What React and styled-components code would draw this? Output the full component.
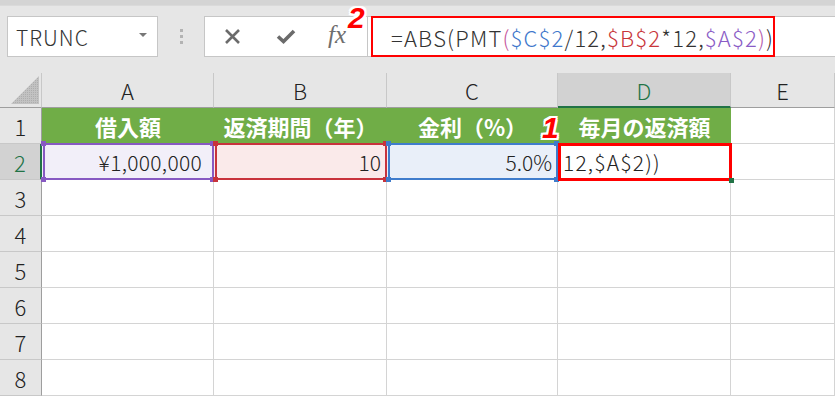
import React from 'react'
import styled, { createGlobalStyle } from 'styled-components'

const GlobalStyle = createGlobalStyle`
  html, body {
    margin: 0;
    padding: 0;
    background: #fff;
  }
  body {
    font-family: "Noto Sans CJK JP", "Noto Sans", sans-serif;
    font-weight: 300;
    color: #222;
  }
`

const Page = styled.div`
  width: 835px;
  height: 397px;
  overflow: hidden;
  background: #fff;
`

const TopStrip = styled.div`
  height: 5px;
  background: #d4d4d4;
  border-bottom: 1px solid #dadada;
`

const FormulaBar = styled.div`
  height: 67px;
  box-sizing: border-box;
  background: #e6e6e6;
  display: flex;
  align-items: flex-start;
  padding: 10px 0 0 7px;
`

const NameBox = styled.div`
  width: 151px;
  height: 41px;
  box-sizing: border-box;
  background: #fff;
  border: 1px solid #c6c6c6;
  display: flex;
  align-items: center;
  justify-content: space-between;
  padding: 0 10px 0 8px;
  font-size: 21px;
  letter-spacing: 1px;
  color: #333;
`

const Caret = styled.span`
  width: 0;
  height: 0;
  border-left: 4px solid transparent;
  border-right: 4px solid transparent;
  border-top: 4px solid #777;
  margin-top: -4px;
`

const Grip = styled.div`
  width: 46px;
  height: 41px;
  display: flex;
  flex-direction: column;
  align-items: center;
  justify-content: center;
  gap: 3px;
  span {
    width: 3px;
    height: 3px;
    background: #b3b3b3;
  }
`

const FxBox = styled.div`
  position: relative;
  width: 164px;
  height: 41px;
  box-sizing: border-box;
  background: #fff;
  border: 1px solid #c6c6c6;
  display: grid;
  grid-template-columns: repeat(3, 54px);
  align-items: center;
  justify-items: center;
`

const FxLabel = styled.span`
  font-family: "Liberation Serif", serif;
  font-style: italic;
  font-size: 25px;
  color: #6e6e6e;
  margin: -3px 0 0 -6px;
`

const Badge = styled.span`
  position: absolute;
  left: ${p => p.$left}px;
  top: ${p => p.$top}px;
  font-family: "Liberation Sans", Arial, sans-serif;
  font-weight: bold;
  font-style: italic;
  font-size: 30px;
  line-height: 1;
  color: #f00;
  z-index: 5;
  text-shadow:
    2px 0 0 #fff, -2px 0 0 #fff, 0 2px 0 #fff, 0 -2px 0 #fff,
    2px 2px 0 #fff, -2px -2px 0 #fff, 2px -2px 0 #fff, -2px 2px 0 #fff;
`

const FormulaInput = styled.div`
  flex: 1;
  height: 41px;
  box-sizing: border-box;
  background: #fff;
  border-top: 1px solid #c6c6c6;
  border-bottom: 1px solid #c6c6c6;
  display: flex;
  align-items: stretch;
  padding-left: 3px;
`

const Highlight = styled.div`
  margin: -1px 0;
  width: 404px;
  box-sizing: border-box;
  border: 2px solid #f00;
  display: flex;
  align-items: center;
  padding-left: 18px;
  font-size: 22px;
  letter-spacing: 1.2px;
  color: #333;
  white-space: nowrap;
`

const Token = styled.span`
  color: ${p => p.$c || '#333'};
`

const Sheet = styled.div`
  display: grid;
  grid-template-columns: 42px 172px 173px 171px 173px 104px;
  grid-template-rows: 35px repeat(8, 36px);
`

const Corner = styled.div`
  background: #e6e6e6;
  border-right: 1px solid #c8c8c8;
  border-bottom: 1px solid #9e9e9e;
  display: flex;
  align-items: flex-end;
  justify-content: flex-end;
  padding: 0 2px 3px 0;
`

const ColHeader = styled.div`
  box-sizing: border-box;
  background: ${p => (p.$active ? '#d2d2d2' : '#e6e6e6')};
  color: ${p => (p.$active ? '#217346' : '#222')};
  border-right: 1px solid #c8c8c8;
  border-bottom: ${p => (p.$active ? '2px solid #217346' : '1px solid #9e9e9e')};
  display: flex;
  align-items: center;
  justify-content: center;
  font-size: 22px;
`

const RowHeader = styled.div`
  box-sizing: border-box;
  background: ${p => (p.$active ? '#d2d2d2' : '#e6e6e6')};
  color: ${p => (p.$active ? '#217346' : '#222')};
  border-right: ${p => (p.$active ? '2px solid #217346' : '1px solid #9e9e9e')};
  border-bottom: 1px solid #c8c8c8;
  display: flex;
  align-items: center;
  justify-content: center;
  font-size: 22px;
`

const Cell = styled.div`
  position: relative;
  box-sizing: border-box;
  background: ${p => p.$fill || '#fff'};
  border-right: 1px solid #d4d4d4;
  border-bottom: 1px solid #d4d4d4;
  display: flex;
  align-items: center;
  justify-content: ${p => (p.$align === 'right' ? 'flex-end' : 'flex-start')};
  padding: 0 ${p => p.$padRight || 5}px 0 5px;
  font-size: 21px;
  letter-spacing: ${p => p.$spacing || 0}px;
  color: #222;
  white-space: nowrap;
`

const HeadCell = styled.div`
  position: relative;
  box-sizing: border-box;
  background: #70ad47;
  border-bottom: 1px solid #d4d4d4;
  display: flex;
  align-items: center;
  justify-content: center;
  font-size: 22px;
  font-weight: bold;
  color: #fff;
`

const RefCell = styled(Cell)`
  &::after {
    content: '';
    position: absolute;
    top: -1px;
    left: 1px;
    right: -1px;
    bottom: -1px;
    border: 2px solid ${p => p.$line};
    z-index: 2;
    pointer-events: none;
  }
`

const Handle = styled.span`
  position: absolute;
  width: 5px;
  height: 5px;
  background: ${p => p.$line};
  z-index: 3;
  ${p => (p.$x === 'left' ? 'left: -1px;' : 'right: -2px;')}
  ${p => (p.$y === 'top' ? 'top: -3px;' : 'bottom: -3px;')}
`

const ActiveCell = styled(Cell)`
  overflow: visible;
  &::after {
    content: '';
    position: absolute;
    top: -1px;
    left: 0;
    right: -2px;
    bottom: -2px;
    border: 3px solid #f00;
    z-index: 3;
  }
`

const FillHandle = styled.span`
  position: absolute;
  right: -4px;
  bottom: -4px;
  width: 5px;
  height: 5px;
  background: #217346;
  z-index: 4;
`

const Cross = () => (
  <svg width="17" height="17" viewBox="0 0 17 17">
    <path d="M2 2 L15 15 M15 2 L2 15" stroke="#6b6b6b" strokeWidth="2.6" fill="none" />
  </svg>
)

const Check = () => (
  <svg width="20" height="15" viewBox="0 0 20 15">
    <path d="M2 7.5 L7.5 12.5 L18 2" stroke="#6b6b6b" strokeWidth="3.6" fill="none" />
  </svg>
)

const SelectAll = () => (
  <svg width="28" height="28" viewBox="0 0 28 28">
    <defs>
      <pattern id="dots" width="2" height="2" patternUnits="userSpaceOnUse">
        <rect width="2" height="2" fill="#c2c2c2" />
        <rect width="1" height="1" fill="#aeaeae" />
      </pattern>
    </defs>
    <polygon points="0,28 28,0 28,28" fill="url(#dots)" />
  </svg>
)

const RefHandles = ({ line }) => (
  <>
    <Handle $line={line} $x="left" $y="top" />
    <Handle $line={line} $x="right" $y="top" />
    <Handle $line={line} $x="left" $y="bottom" />
    <Handle $line={line} $x="right" $y="bottom" />
  </>
)

const columns = ['A', 'B', 'C', 'D', 'E']
const emptyRows = [3, 4, 5, 6, 7, 8]

export default function App() {
  return (
    <Page>
      <GlobalStyle />
      <TopStrip />
      <FormulaBar>
        <NameBox>
          TRUNC
          <Caret />
        </NameBox>
        <Grip>
          <span />
          <span />
          <span />
        </Grip>
        <FxBox>
          <Cross />
          <Check />
          <FxLabel>fx</FxLabel>
          <Badge $left={143} $top={-14}>2</Badge>
        </FxBox>
        <FormulaInput>
          <Highlight>
            <Token>=ABS(PMT</Token>
            <Token $c="#c4559b">(</Token>
            <Token $c="#3f78cc">$C$2</Token>
            <Token>/12,</Token>
            <Token $c="#c8363a">$B$2</Token>
            <Token>*12,</Token>
            <Token $c="#8a5cc6">$A$2</Token>
            <Token $c="#b25aab">)</Token>
            <Token>)</Token>
          </Highlight>
        </FormulaInput>
      </FormulaBar>

      <Sheet>
        <Corner>
          <SelectAll />
        </Corner>
        {columns.map(c => (
          <ColHeader key={c} $active={c === 'D'}>{c}</ColHeader>
        ))}

        <RowHeader>1</RowHeader>
        <HeadCell>借入額</HeadCell>
        <HeadCell>返済期間（年）</HeadCell>
        <HeadCell>金利（%）</HeadCell>
        <HeadCell>
          <Badge $left={-16} $top={5}>1</Badge>
          毎月の返済額
        </HeadCell>
        <Cell />

        <RowHeader $active>2</RowHeader>
        <RefCell $align="right" $padRight={11} $spacing={0.3} $fill="#f2eff9" $line="#8759c2">
          ¥1,000,000
          <RefHandles line="#8759c2" />
        </RefCell>
        <RefCell $align="right" $fill="#faeaea" $line="#c8333c">
          10
          <RefHandles line="#c8333c" />
        </RefCell>
        <RefCell $align="right" $fill="#e9eff9" $line="#3f7ccc">
          5.0%
          <RefHandles line="#3f7ccc" />
        </RefCell>
        <ActiveCell $spacing={1.2}>
          12,$A$2))
          <FillHandle />
        </ActiveCell>
        <Cell />

        {emptyRows.map(r => (
          <React.Fragment key={r}>
            <RowHeader>{r}</RowHeader>
            {columns.map(c => (
              <Cell key={c} />
            ))}
          </React.Fragment>
        ))}
      </Sheet>
    </Page>
  )
}
